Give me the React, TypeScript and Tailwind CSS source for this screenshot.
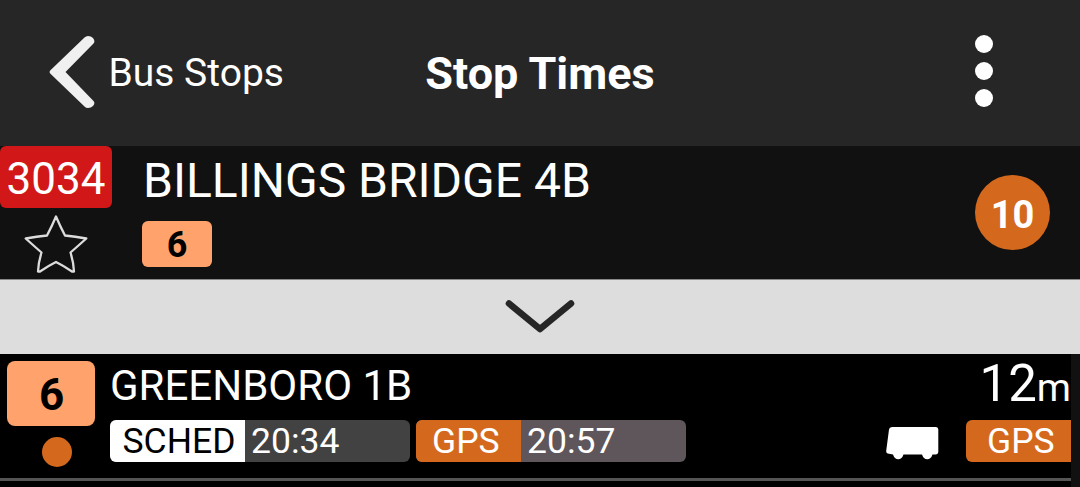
interface TimeChipProps {
  label: string;
  time: string;
  className: string;
  labelClassName: string;
}

function BackIcon() {
  return (
    <svg className="mb-[3px] h-[74px] w-[46px] shrink-0" viewBox="0 0 46 74" fill="#f0f0f0">
      <path d="M35.5 2.5 Q37 1 39 1 Q42 1 44 3 Q46.5 6 44.5 8.5 L16.5 37 L44.5 66 Q46.5 68 44 71 Q42 73 39 73 Q37 73 35.5 71.5 L1.2 38.5 Q0 37 1.2 35.5 Z" />
    </svg>
  );
}

function StarIcon() {
  return (
    <svg className="h-[60px] w-[64px]" viewBox="0 0 64 60" fill="none">
      <path
        d="M32 2.5 Q36 12 41 21.5 Q51 22.5 62.3 24.5 Q54 32 46.5 38.5 Q49.5 48 50 57.5 L48 57.5 Q40 52 32 48 Q24 52 16 57.5 L14 57.5 Q14.5 48 17.5 38.5 Q10 32 1.7 24.5 Q13 22.5 23 21.5 Q28 12 32 2.5 Z"
        stroke="#dcdcdc"
        strokeWidth="2.3"
        strokeLinejoin="round"
      />
    </svg>
  );
}

function BusIcon() {
  return (
    <svg className="h-[33px] w-[53px]" viewBox="0 0 53 33" fill="#ffffff">
      <path d="M6 0 H50 Q52.3 0 52.3 2.5 V24.5 Q52.3 27.5 49.5 27.5 H46.5 Q45 32.2 41.2 32.2 Q37.5 32.2 36 27.5 H17.5 Q16 32.2 12.2 32.2 Q8.5 32.2 7 27.5 L3 26.7 Q0 26.5 0.2 24 L3 2.5 Q3.3 0 6 0 Z" />
    </svg>
  );
}

function TimeChip({ label, time, className, labelClassName }: TimeChipProps) {
  return (
    <div className={`flex h-[42px] overflow-hidden rounded-md text-[35.5px] leading-[43px] ${className}`}>
      <span className={`h-full shrink-0 ${labelClassName}`}>{label}</span>
      <span className="pl-[6px]">{time}</span>
    </div>
  );
}

export default function App() {
  return (
    <div className="flex h-[487px] w-[1080px] flex-col overflow-hidden bg-[#111111] font-['Roboto',sans-serif] whitespace-nowrap text-white">
      {/* Header */}
      <header className="grid h-[146px] shrink-0 grid-cols-3 items-center bg-[#262626]">
        <button className="flex items-center pl-[49px] text-left">
          <BackIcon />
          <span className="pl-[13.5px] text-[39px] leading-[46px]">Bus Stops</span>
        </button>
        <h1 className="pt-[2px] text-center text-[45px] leading-[54px] font-bold">Stop Times</h1>
        <button className="mr-[87px] mb-[4px] flex flex-col items-center gap-[9px] justify-self-end">
          <span className="size-[18px] rounded-full bg-white" />
          <span className="size-[18px] rounded-full bg-white" />
          <span className="size-[18px] rounded-full bg-white" />
        </button>
      </header>

      {/* Current stop */}
      <section className="flex h-[133px] shrink-0">
        <div className="flex w-[112px] flex-col items-center">
          <span className="h-[62px] w-full rounded-md bg-[#d11717] text-center text-[44px] leading-[66px]">3034</span>
          <div className="pt-[6px]">
            <StarIcon />
          </div>
        </div>
        <div className="flex flex-1 flex-col items-start pl-[30px]">
          <h2 className="h-[75px] pl-px text-[48px] leading-[69px]">BILLINGS BRIDGE 4B</h2>
          <span className="h-[46px] w-[70px] rounded-md bg-[#ffa26b] text-center text-[36px] leading-[49px] font-bold text-black">
            6
          </span>
        </div>
        <span className="mt-[29px] mr-[30px] size-[75px] rounded-full bg-[#d4691e] text-center text-[38px] leading-[80px] font-bold">
          10
        </span>
      </section>

      {/* Expand bar */}
      <button className="flex h-[75px] shrink-0 items-center justify-center border-t border-[#888888] bg-[#dddddd]">
        <svg className="h-[34px] w-[70px]" viewBox="0 0 70 34" fill="none">
          <path d="M4 3.5 L35 29 L66 3.5" stroke="#262626" strokeWidth="6.6" strokeLinecap="round" strokeLinejoin="round" />
        </svg>
      </button>

      {/* Arrivals */}
      <main className="mr-[9px] flex-1 bg-black">
        <article className="flex h-[127px] border-b-3 border-[#555555]">
          <div className="flex w-[110px] flex-col items-start pt-[7px] pl-[7px]">
            <span className="h-[65px] w-[88px] rounded-lg bg-[#ffa26b] pl-px text-center text-[44px] leading-[68px] font-bold text-black">
              6
            </span>
            <span className="mt-[11px] ml-[35px] size-[30px] rounded-full bg-[#d4691e]" />
          </div>
          <div className="flex-1">
            <h3 className="h-[66px] text-[42px] leading-[63px]">GREENBORO 1B</h3>
            <div className="flex gap-[6px]">
              <TimeChip
                label="SCHED"
                time="20:34"
                className="w-[300px] bg-[#424242]"
                labelClassName="w-[135px] bg-white pl-[12.5px] text-black"
              />
              <TimeChip
                label="GPS"
                time="20:57"
                className="w-[270px] bg-[#5e565a]"
                labelClassName="w-[105px] bg-[#d4691e] pl-[16px]"
              />
            </div>
          </div>
          <div className="flex w-[185px] flex-col items-end">
            <div className="h-[66px] text-[51px] leading-[60px]">
              12<span className="text-[39px]">m</span>
            </div>
            <div className="flex w-full justify-between">
              <div className="pt-[7px]">
                <BusIcon />
              </div>
              <span className="h-[42px] w-[105px] rounded-l-md bg-[#d4691e] pl-[21px] text-[35.5px] leading-[43px]">
                GPS
              </span>
            </div>
          </div>
        </article>
      </main>
    </div>
  );
}
